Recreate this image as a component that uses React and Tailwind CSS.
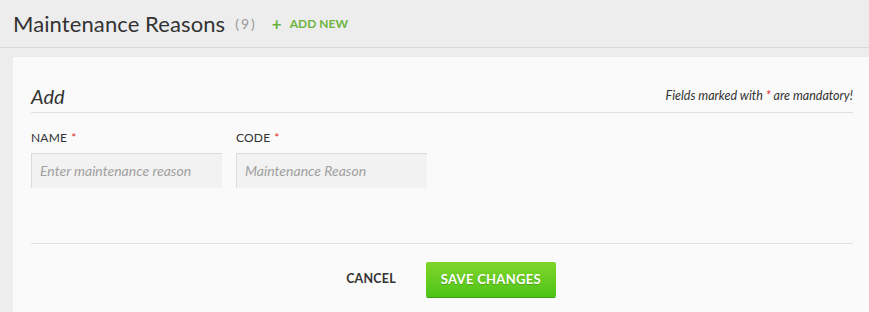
import React from "react";

const Star = () => <span className="text-[#e0262b] ml-1">*</span>;

const Field = ({ label, placeholder }) => (
  <div className="flex flex-col w-[191px]">
    <label className="text-[12px] text-[#333] uppercase tracking-[0.2px] h-[16px] leading-[16px]">
      {label}
      <Star />
    </label>
    <input
      type="text"
      placeholder={placeholder}
      className="mt-[7px] h-[35px] px-[8px] pb-[2px] bg-[#f2f2f2] border-t border-l border-[#dcdcdc] text-[14px] italic placeholder:text-[#a0a0a0] outline-none"
    />
  </div>
);

export default function App() {
  return (
    <div
      className="w-[869px] h-[312px] overflow-hidden bg-[#ededed] text-[#333]"
      style={{ fontFamily: "Lato, 'Open Sans', sans-serif" }}
    >
      {/* Header */}
      <div className="h-[48px] border-b border-[#d9d9d9] flex items-center pl-[13px]">
        <h1 className="text-[22px] text-[#333] leading-none tracking-[0.1px]">Maintenance Reasons</h1>
        <span className="ml-[10px] text-[14px] text-[#999] tracking-[2px]">(9)</span>
        <button className="ml-[15px] flex items-center text-[12px] font-bold text-[#6db33f]">
          <span className="text-[17px] mr-[8px] leading-none">+</span>
          ADD NEW
        </button>
      </div>

      {/* Panel */}
      <div className="mt-[9px] ml-[13px] bg-[#fafafa] h-[260px] pl-[18px] pr-[16px] pt-[27px]">
        <div className="flex items-end justify-between border-b border-[#e0e0e0] pb-[4px]">
          <h2 className="text-[20px] italic leading-[24px]">Add</h2>
          <p className="text-[12.5px] italic text-[#333] mb-[2px]">
            Fields marked with <span className="text-[#e0262b]">*</span> are mandatory!
          </p>
        </div>

        <div className="flex gap-[14px] mt-[17px]">
          <Field label="Name" placeholder="Enter maintenance reason" />
          <Field label="Code" placeholder="Maintenance Reason" />
        </div>

        <div className="mt-[55px] border-t border-[#e0e0e0] flex justify-center items-center pt-[18px] pl-[18px] gap-[30px]">
          <button className="text-[12.5px] font-bold text-[#333] tracking-[0.2px]">CANCEL</button>
          <button className="w-[130px] h-[35px] rounded-[2px] bg-gradient-to-b from-[#7fd52a] to-[#4cc417] text-white text-[13px] font-bold tracking-[0.3px] shadow-[0_1px_0_#3a9e10] [text-shadow:0_1px_1px_rgba(0,0,0,0.2)]">
            SAVE CHANGES
          </button>
        </div>
      </div>
    </div>
  );
}
